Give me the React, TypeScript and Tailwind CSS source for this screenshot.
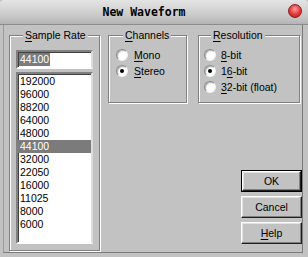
import React from "react";

const U = ({ children }: { children: React.ReactNode }) => (
  <span className="underline underline-offset-[2px] decoration-1">{children}</span>
);

const Radio = ({ checked }: { checked?: boolean }) => (
  <span className="w-[12px] h-[12px] shrink-0 rounded-full bg-white border border-t-[#8a8a8a] border-l-[#8a8a8a] border-b-[#f0f0f0] border-r-[#f0f0f0] shadow-[inset_1px_1px_1px_#b0b0b0] flex items-center justify-center">
    {checked && <span className="w-[4px] h-[4px] rounded-full bg-black" />}
  </span>
);

const Group = ({
  label,
  className,
  children,
}: {
  label: React.ReactNode;
  className: string;
  children: React.ReactNode;
}) => (
  <fieldset
    className={`border border-[#808080] shadow-[1px_1px_0_#fff,inset_1px_1px_0_#fff] ${className}`}
  >
    <legend className="ml-[7px] px-[2px] bg-[#c2c2c2] leading-[13px] text-black">{label}</legend>
    {children}
  </fieldset>
);

const Btn = ({ children, def }: { children: React.ReactNode; def?: boolean }) => (
  <div
    className={`w-[61px] h-[22px] ${def ? "border border-black" : ""} flex`}
  >
    <div className="flex-1 flex items-center justify-center bg-[#c2c2c2] border border-t-white border-l-white border-b-[#202020] border-r-[#202020] shadow-[inset_-1px_-1px_0_#808080,inset_1px_1px_0_#e0e0e0] text-black">
      {children}
    </div>
  </div>
);

const rates = ["192000", "96000", "88200", "64000", "48000", "44100", "32000", "22050", "16000", "11025", "8000", "6000"];

export default function App() {
  return (
    <div className="w-[308px] h-[257px] bg-[#c2c2c2] flex flex-col overflow-hidden font-['Liberation_Sans',Arial,sans-serif] text-[10.5px] leading-[13px] text-black">
      {/* Title bar */}
      <div className="h-[25px] shrink-0 relative flex items-center justify-center pr-[20px] bg-[linear-gradient(to_bottom,#e4e4e4,#d4d4d4_40%,#c4c4c4_75%,#b4b4b4)] border-b border-[#8c8c8c] rounded-t-[4px]">
        <span className="font-['DejaVu_Sans_Mono',monospace] font-bold text-[11.5px] text-black">
          New Waveform
        </span>
        <span className="absolute right-[6px] top-[4px] w-[14px] h-[14px] rounded-full border border-[#8a2020] bg-[radial-gradient(circle_at_50%_35%,#ff9a9a,#e03838_55%,#a81818)]" />
      </div>

      {/* Body */}
      <div className="flex-1 flex pl-[3px] pr-[5px] pb-[4px]">
        <div className="flex-1 flex border-l border-b border-r border-l-[#9a9a9a] border-b-[#7a7a7a] border-r-[#7a7a7a] pl-[5px] pt-[4px]">
          {/* Sample rate */}
          <Group
            className="w-[90px] h-[222px] px-[6px] pt-[8px]"
            label={
              <>
                <U>S</U>ample Rate
              </>
            }
          >
            <div className="w-[77px] h-[19px] bg-white border-2 border-t-[#808080] border-l-[#808080] border-b-white border-r-[#dcdcdc] shadow-[inset_1px_1px_0_#404040] flex items-center pl-[1px]">
              <span className="bg-[#7b7b7b] text-white px-[1px]">44100</span>
            </div>
            <div className="mt-[3px] w-[77px] h-[172px] bg-white border-2 border-t-[#808080] border-l-[#808080] border-b-white border-r-[#dcdcdc] shadow-[inset_1px_1px_0_#404040] pt-[1px]">
              {rates.map((r) => (
                <div
                  key={r}
                  className={`h-[13px] pl-[2px] leading-[13px] ${r === "44100" ? "bg-[#7b7b7b] text-white" : ""}`}
                >
                  {r}
                </div>
              ))}
            </div>
          </Group>

          {/* Right side */}
          <div className="ml-[8px] flex flex-col">
            <div className="flex gap-[11px]">
              <Group
                className="w-[79px] h-[74px] pl-[7px] pt-[5px]"
                label={
                  <>
                    <U>C</U>hannels
                  </>
                }
              >
                <div className="h-[16px] flex items-center gap-[6px]">
                  <Radio />
                  <span>
                    <U>M</U>ono
                  </span>
                </div>
                <div className="h-[16px] flex items-center gap-[6px]">
                  <Radio checked />
                  <span>
                    <U>S</U>tereo
                  </span>
                </div>
              </Group>
              <Group
                className="w-[102px] h-[74px] pl-[5px] pt-[5px]"
                label={
                  <>
                    <U>R</U>esolution
                  </>
                }
              >
                <div className="h-[16px] flex items-center gap-[5px]">
                  <Radio />
                  <span>
                    <U>8</U>-bit
                  </span>
                </div>
                <div className="h-[16px] flex items-center gap-[5px]">
                  <Radio checked />
                  <span>
                    1<U>6</U>-bit
                  </span>
                </div>
                <div className="h-[16px] flex items-center gap-[5px]">
                  <Radio />
                  <span>
                    <U>3</U>2-bit (float)
                  </span>
                </div>
              </Group>
            </div>
            <div className="mt-[67px] self-end flex flex-col gap-[4px] mr-[-2px]">
              <Btn def>OK</Btn>
              <Btn>Cancel</Btn>
              <Btn>
                <U>H</U>elp
              </Btn>
            </div>
          </div>
        </div>
      </div>
    </div>
  );
}
